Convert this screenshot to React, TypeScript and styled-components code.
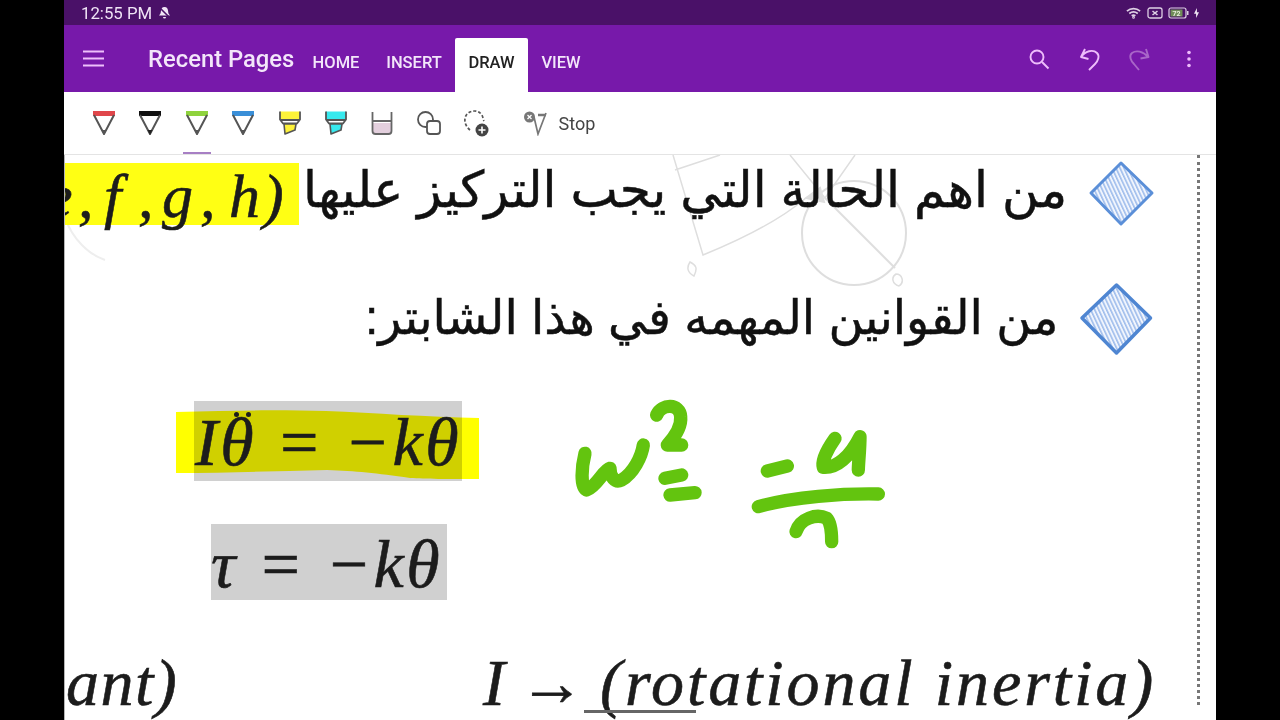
import React from 'react';
import styled, { createGlobalStyle } from 'styled-components';

const Global = createGlobalStyle`
  html, body { margin: 0; padding: 0; background: #000; }
  #root { width: 1280px; height: 720px; overflow: hidden; }
`;
const Stage = styled.div`
  width: 1280px; height: 720px; background: #000; display: flex; justify-content: center;
`;
const Tablet = styled.div`
  width: 1152px; height: 720px; display: flex; flex-direction: column; background: #fff;
  font-family: Roboto, "Liberation Sans", sans-serif; filter: blur(0.55px);
`;
const StatusBar = styled.div`
  height: 25px; flex: none; background: #4a1168; color: #f0e4f6; display: flex; align-items: center;
  padding: 0 17px 0 17px; font-size: 16.8px; gap: 6px;
`;
const StatusRight = styled.div`
  margin-left: auto; display: flex; align-items: center; gap: 5px;
`;
const Header = styled.header`
  height: 67px; flex: none; background: #7719aa; display: flex; align-items: stretch; color: #f3e6fa;
`;
const MenuSlot = styled.div`
  width: 84px; flex: none; display: flex; align-items: center; padding: 0 0 0 19px; box-sizing: border-box;
`;
const Title = styled.div`
  font-size: 23.8px; font-weight: 500; width: 151px; flex: none; display: flex; align-items: center; white-space: nowrap;
`;
const Tab = styled.div<{ $active?: boolean; $w: number }>`
  width: ${p => p.$w}px; flex: none; margin-top: 13px; display: flex; align-items: center; justify-content: center;
  font-size: 16.5px; font-weight: 500; box-sizing: border-box; padding-bottom: 6px;
  border-radius: 2px 2px 0 0;
  background: ${p => (p.$active ? '#fff' : 'transparent')};
  color: ${p => (p.$active ? '#222' : '#f3e6fa')};
`;
const HeaderActions = styled.div`
  margin-left: auto; display: flex; align-items: center; padding: 0 15px 0 0; gap: 26px;
`;
const ToolBar = styled.div`
  height: 63px; flex: none; background: #fff; display: flex; align-items: center; padding-left: 27px;
  box-sizing: border-box; border-bottom: 1px solid #e4e4e4; position: relative; gap: 20.4px;
`;
const ActiveMark = styled.div`
  position: absolute; left: 119px; bottom: 0; width: 28px; height: 2px; background: #a77fc4;
`;
const StopGroup = styled.div`
  display: flex; align-items: center; gap: 10px; margin-left: 12px; font-size: 18px; color: #444;
`;
const Canvas = styled.main`
  flex: 1; position: relative; overflow: hidden; background: #fff; border-left: 1px solid #b5b5b5; box-sizing: border-box;
`;
const Ink = styled.svg`
  position: absolute; left: -65px; top: -155px; width: 1280px; height: 720px;
`;
const Arabic = styled.div<{ $x: number; $y: number; $size: number }>`
  position: absolute; left: ${p => p.$x - 65}px; top: ${p => p.$y - 155}px; direction: rtl; white-space: nowrap;
  font-family: "Liberation Sans", "DejaVu Sans", sans-serif; font-size: ${p => p.$size}px; line-height: 60px; color: #111;
  letter-spacing: 0.6px; -webkit-text-stroke: 0.5px #111;
`;
const Highlight = styled.div`
  position: absolute; left: -1px; top: 8px; width: 235px; height: 62px; background: #ffff14;
`;
const Plate = styled.div<{ $x: number; $y: number; $w: number; $h: number }>`
  position: absolute; left: ${p => p.$x - 65}px; top: ${p => p.$y - 155}px; width: ${p => p.$w}px; height: ${p => p.$h}px;
  background: #d0d0d0;
`;
const Mark = styled.svg`
  position: absolute; left: 111px; top: 250px; width: 303px; height: 75px; mix-blend-mode: multiply;
`;
const Formula = styled.div<{ $x: number; $y: number; $size: number; $spacing?: number }>`
  position: absolute; left: ${p => p.$x - 65}px; top: ${p => p.$y - 155}px; white-space: nowrap;
  font-family: "Liberation Serif", serif; font-style: italic; font-size: ${p => p.$size}px; line-height: 1; color: #1c1c1c;
  letter-spacing: ${p => p.$spacing ?? 0}px; -webkit-text-stroke: 0.6px #1c1c1c; display: flex;
`;
const Slot = styled.span<{ $w: number }>`
  width: ${p => p.$w}px; flex: none; display: block;
`;
const Dots = styled.div`
  position: absolute; left: 169px; top: 257px; width: 17px; display: flex; justify-content: space-between;
  &::before, &::after { content: ''; width: 5px; height: 5px; border-radius: 50%; background: #1c1c1c; }
`;
const Underline = styled.div`
  position: absolute; left: 519px; top: 555px; width: 112px; height: 3px; background: #666;
`;
const DashLine = styled.div`
  position: absolute; left: 1132px; top: 0; bottom: 15px; border-left: 3px dotted #777;
`;

const Pen = ({ color }: { color: string }) => (
  <svg width="26" height="26" viewBox="0 0 26 26" fill="none">
    <path d="M2 3.500h22" stroke={color} strokeWidth="5" />
    <path d="M3 5 L13 24 L23 5" stroke="#555" strokeWidth="2" strokeLinejoin="round" />
    <path d="M10.500 20h5l-2.500 5z" fill={color === '#111' ? '#222' : '#555'} />
  </svg>
);

const Marker = ({ color }: { color: string }) => (
  <svg width="26" height="26" viewBox="0 0 26 26" fill="none">
    <path d="M3 1.500h20v9H3z" fill={color} />
    <path d="M3 1.500v8l3 4h14l3-4v-8M3 10h20" stroke="#555" strokeWidth="1.800" strokeLinejoin="round" />
    <path d="M7 14h12l-1 6-10 4z" fill={color} stroke="#555" strokeWidth="1.600" strokeLinejoin="round" />
  </svg>
);

const Eraser = () => (
  <svg width="26" height="26" viewBox="0 0 26 26" fill="none">
    <path d="M3 13h20v8a3 3 0 0 1-3 3H6a3 3 0 0 1-3-3z" fill="#e3cfdd" />
    <path d="M3.500 2v19a3 3 0 0 0 3 3h13a3 3 0 0 0 3-3V2M3.500 11h19" stroke="#666" strokeWidth="1.800" />
  </svg>
);

const Shapes = () => (
  <svg width="26" height="26" viewBox="0 0 26 26" fill="none" stroke="#555" strokeWidth="1.800">
    <circle cx="9.500" cy="9.500" r="7.500" />
    <rect x="11" y="11" width="13" height="13" rx="3" fill="#fff" />
  </svg>
);

const Lasso = () => (
  <svg width="28" height="28" viewBox="0 0 28 28" fill="none">
    <path d="M8 21C3 17 1 10 5 5c4-4 11-4 14 0 2 2 2 5 3 7" stroke="#555" strokeWidth="1.700" strokeDasharray="3 2" />
    <circle cx="20" cy="21" r="6.500" fill="#444" />
    <path d="M20 17.500v7M16.500 21h7" stroke="#fff" strokeWidth="1.600" />
  </svg>
);

const StopIcon = () => (
  <svg width="26" height="26" viewBox="0 0 26 26" fill="none">
    <path d="M11 7 L15 24 L23 3" stroke="#777" strokeWidth="1.700" />
    <path d="M15 5h8" stroke="#777" strokeWidth="2.500" />
    <circle cx="6.500" cy="7" r="5.500" fill="#777" />
    <path d="M4.500 5l4 4M8.500 5l-4 4" stroke="#fff" strokeWidth="1.300" />
  </svg>
);

const Glyph = styled.svg`
  display: block; flex: none;
`;

const App = () => (
  <Stage>
    <Global />
    <Tablet>
      <StatusBar>
        <span>12:55 PM</span>
        <Glyph width="13" height="14" viewBox="0 0 13 14" fill="#f0e4f6">
          <path d="M6.500 1c2.500 0 3.600 2 3.600 4.300 0 2 .8 3 1.900 4.200H1c1.100-1.200 1.900-2.200 1.900-4.200C2.900 3 4 1 6.500 1zM5 11h3a1.500 1.500 0 0 1-3 0z" />
          <path d="M1 1l11 11" stroke="#4a1168" strokeWidth="1.600" />
        </Glyph>
        <StatusRight>
          <Glyph width="16" height="12" viewBox="0 0 17 12" fill="none" stroke="#ddd0e4" strokeWidth="1.900">
            <path d="M1 4c4-3.500 10-3.500 14 0M3.500 6.500c3-2.200 6-2.200 9 0M6 9c1.300-.8 2.700-.8 4 0" />
            <circle cx="8" cy="10.700" r="0.500" />
          </Glyph>
          <Glyph width="16" height="12" viewBox="0 0 16 12" fill="none" stroke="#ddd0e4" strokeWidth="1.300">
            <rect x="1" y="1" width="14" height="10" rx="2" />
            <path d="M5.500 4l5 4M10.500 4l-5 4" strokeWidth="1.600" />
          </Glyph>
          <Glyph width="21" height="12" viewBox="0 0 21 12" fill="none">
            <rect x="1" y="1" width="17" height="10" rx="2" stroke="#ddd0e4" strokeWidth="1.200" />
            <rect x="2.500" y="2.500" width="12" height="7" fill="#6f8c58" />
            <text x="8.500" y="8.700" fontSize="7" fontFamily="Roboto" fontWeight="700" textAnchor="middle" fill="#e8efdc">72</text>
            <rect x="19" y="4" width="1.500" height="4" fill="#ddd0e4" />
          </Glyph>
          <Glyph width="5" height="12" viewBox="0 0 6 12" fill="#efe5f3">
            <path d="M3.500 0v5H6l-3.500 7V7H0z" />
          </Glyph>
        </StatusRight>
      </StatusBar>
      <Header>
        <MenuSlot>
          <Glyph width="21" height="17" viewBox="0 0 21 17" stroke="#eec0fb" strokeWidth="2">
            <path d="M0 1.500h21M0 8.500h21M0 15.500h21" />
          </Glyph>
        </MenuSlot>
        <Title>Recent Pages</Title>
        <Tab $w={74}>HOME</Tab>
        <Tab $w={82}>INSERT</Tab>
        <Tab $w={73} $active>DRAW</Tab>
        <Tab $w={66}>VIEW</Tab>
        <HeaderActions>
          <Glyph width="24" height="24" viewBox="0 0 24 24" fill="none" stroke="#eebdfb" strokeWidth="1.900">
            <circle cx="10" cy="10" r="6.500" />
            <path d="M15 15l6.500 6.500" />
          </Glyph>
          <Glyph width="24" height="24" viewBox="0 0 24 24" fill="none" stroke="#eebdfb" strokeWidth="1.900" strokeLinejoin="round">
            <path d="M8 2 4 10 11.500 12M4 10C8 4 16 2 20 6c3 3 1 8-2 11l-6 6" />
          </Glyph>
          <Glyph width="24" height="24" viewBox="0 0 24 24" fill="none" stroke="#a966c8" strokeWidth="1.900" strokeLinejoin="round">
            <path d="M19 2l2.500 8-8 1.500M21 10C16 4 9 3 5 6c-3.500 3-1 8 2 11l5 6" />
          </Glyph>
          <Glyph width="24" height="24" viewBox="0 0 24 24" fill="#eebdfb">
            <circle cx="12" cy="5.500" r="1.800" /><circle cx="12" cy="12" r="1.800" /><circle cx="12" cy="18.500" r="1.800" />
          </Glyph>
        </HeaderActions>
      </Header>
      <ToolBar>
        <Pen color="#e0474b" />
        <Pen color="#111" />
        <Pen color="#8fd33d" />
        <Pen color="#3a8fd8" />
        <Marker color="#fdf239" />
        <Marker color="#37e9ee" />
        <Eraser />
        <Shapes />
        <Lasso />
        <StopGroup>
          <StopIcon />
          <span>Stop</span>
        </StopGroup>
        <ActiveMark />
      </ToolBar>
      <Canvas>
        <Ink viewBox="0 0 1280 720" fill="none">
          <defs>
            <pattern id="hatch" width="3.600" height="3.600" patternUnits="userSpaceOnUse" patternTransform="rotate(-25)">
              <rect width="3.600" height="3.600" fill="#f1f5fd" />
              <rect width="1.600" height="3.600" fill="#9fbdec" />
            </pattern>
          </defs>
          <g stroke="#dedede" strokeWidth="2">
            <circle cx="854" cy="233" r="52" />
            <path d="M825 198 895 268" />
            <path d="M673 155 703 255C740 240 780 220 806 198M675 170 720 155M790 155 825 198 855 155" strokeWidth="1.500" />
            <path d="M690 262c6 3 8 6 4 14c-6-3-8-8-4-14zM896 274c6 0 9 8 3 12c-7-2-8-9-3-12z" strokeWidth="1.500" />
            <path d="M806 198l14-10 4 14z" fill="#dedede" />
            <path d="M64 215C72 240 90 255 105 260" stroke="#eeeeee" />
          </g>
          <path d="M1121 163 1152 193 1121 224 1091 193Z" fill="url(#hatch)" stroke="#5b8fd8" strokeWidth="3" strokeLinejoin="round" />
          <path d="M1116.500 285 1150.500 318 1116.500 353 1082 318Z" fill="url(#hatch)" stroke="#4f86d2" strokeWidth="3.500" strokeLinejoin="round" />
        </Ink>
        <Highlight />
        <Arabic $x={303} $y={160} $size={50.3}>من اهم الحالة التي يجب التركيز عليها</Arabic>
        <Arabic $x={365} $y={288} $size={47.9}>من القوانين المهمه في هذا الشابتر:</Arabic>
        <Formula $x={45} $y={165} $size={62}>
          <Slot $w={33}>e</Slot>
          <Slot $w={26}>,</Slot>
          <Slot $w={34}>f</Slot>
          <Slot $w={24}>,</Slot>
          <Slot $w={38}>g</Slot>
          <Slot $w={29}>,</Slot>
          <Slot $w={34}>h</Slot>
          <Slot $w={30}>)</Slot>
        </Formula>
        <Plate $x={194} $y={401} $w={268} $h={80} />
        <Plate $x={211} $y={524} $w={236} $h={76} />
        <Mark viewBox="0 0 303 75">
          <path d="M0 7C60 5 110 5 150 6C200 8 250 12 303 13V74C270 74 250 74 234 73C200 68 180 66 151 65C100 66 50 68 0 68Z" fill="#ffff00" />
        </Mark>
        <Formula $x={195} $y={408} $size={68} $spacing={2.600}>Iθ = −kθ</Formula>
        <Dots />
        <Formula $x={211} $y={530} $size={68} $spacing={2.500}>τ = −kθ</Formula>
        <Formula $x={66} $y={650} $size={66} $spacing={1.500}>ant)</Formula>
        <Formula $x={483} $y={650} $size={66}>I</Formula>
        <Formula $x={519} $y={650} $size={66}>→</Formula>
        <Formula $x={600} $y={650} $size={66} $spacing={2.900}>(rotational inertia)</Formula>
        <Underline />
        <DashLine />
        <Ink viewBox="-1680 -1170 3840 2160" stroke="#63c40f" strokeWidth="40" strokeLinecap="round" strokeLinejoin="round" fill="none">
          <path d="M75 190C65 230 60 290 80 300C110 290 130 240 150 235C150 260 165 280 185 270C220 250 245 200 250 165" />
          <path d="M290 75C305 40 360 40 362 80C365 110 345 140 322 165L365 165" />
          <path d="M315 265 365 255M330 315 405 308M622 243 682 228" />
          <path d="M825 145C800 180 785 215 790 232C830 235 870 200 900 140C900 180 895 220 895 240" />
          <path d="M595 350C700 320 850 310 955 312" />
          <path d="M708 425C720 385 770 370 800 385C815 400 815 440 815 455" />
        </Ink>
      </Canvas>
    </Tablet>
  </Stage>
);

export default App;
